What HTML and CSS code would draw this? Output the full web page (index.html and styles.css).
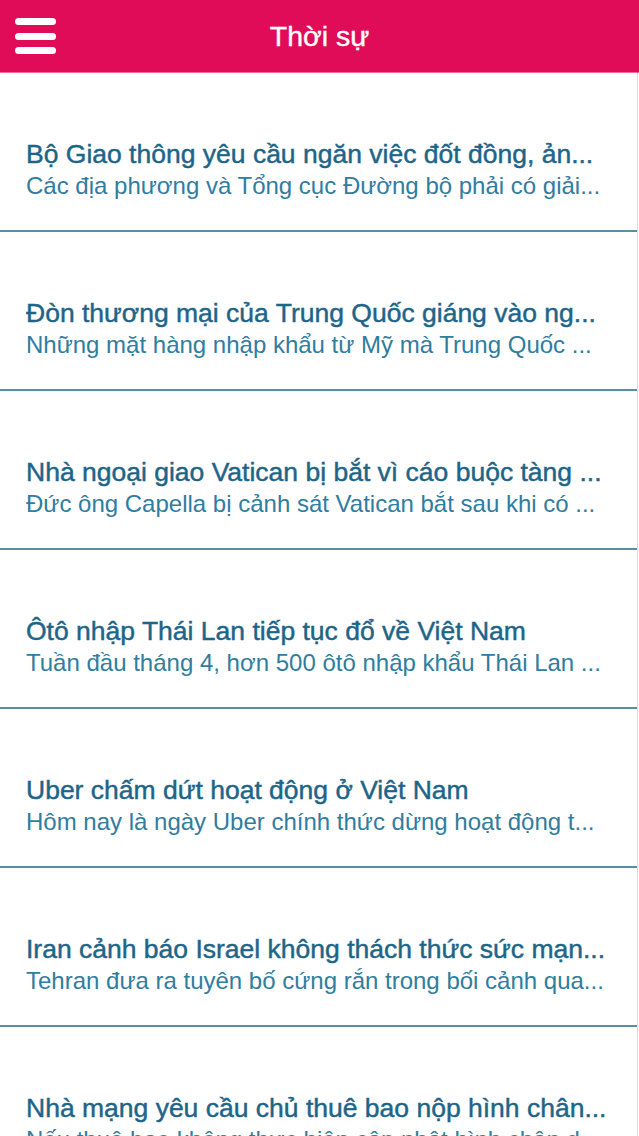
FILE: index.html
```html
<!DOCTYPE html>
<html lang="vi">
<head>
<meta charset="utf-8">
<title>Thời sự</title>
<link rel="stylesheet" href="styles.css">
</head>
<body>
<header class="topbar">
  <button class="menu" aria-label="Menu">
    <span class="bar"></span><span class="bar"></span><span class="bar"></span>
  </button>
  <h1 class="title">Thời sự</h1>
</header>
<ul class="list">
  <li class="item">
    <div class="head">Bộ Giao thông yêu cầu ngăn việc đốt đồng, ản...</div>
    <div class="sub">Các địa phương và Tổng cục Đường bộ phải có giải...</div>
  </li>
  <li class="item">
    <div class="head">Đòn thương mại của Trung Quốc giáng vào ng...</div>
    <div class="sub">Những mặt hàng nhập khẩu từ Mỹ mà Trung Quốc ...</div>
  </li>
  <li class="item">
    <div class="head">Nhà ngoại giao Vatican bị bắt vì cáo buộc tàng ...</div>
    <div class="sub">Đức ông Capella bị cảnh sát Vatican bắt sau khi có ...</div>
  </li>
  <li class="item">
    <div class="head">Ôtô nhập Thái Lan tiếp tục đổ về Việt Nam</div>
    <div class="sub">Tuần đầu tháng 4, hơn 500 ôtô nhập khẩu Thái Lan ...</div>
  </li>
  <li class="item">
    <div class="head">Uber chấm dứt hoạt động ở Việt Nam</div>
    <div class="sub">Hôm nay là ngày Uber chính thức dừng hoạt động t...</div>
  </li>
  <li class="item">
    <div class="head">Iran cảnh báo Israel không thách thức sức mạn...</div>
    <div class="sub">Tehran đưa ra tuyên bố cứng rắn trong bối cảnh qua...</div>
  </li>
  <li class="item">
    <div class="head">Nhà mạng yêu cầu chủ thuê bao nộp hình chân...</div>
    <div class="sub">Nếu thuê bao không thực hiện cập nhật hình chân d</div>
  </li>
</ul>
</body>
</html>
```
FILE: styles.css
```css
* { box-sizing: border-box; }
html, body {
  margin: 0;
  padding: 0;
  background: #ffffff;
  font-family: "Liberation Sans", Arial, sans-serif;
  overflow: hidden;
  height: 1136px;
}
.topbar {
  height: 73px;
  background: #e00c58;
  border-bottom: 1px solid #ef6a95;
  display: flex;
  align-items: center;
  justify-content: center;
  position: relative;
}
.menu {
  position: absolute;
  left: 15px;
  top: 18px;
  width: 41px;
  height: 36px;
  padding: 0;
  border: 0;
  background: transparent;
  display: flex;
  flex-direction: column;
  justify-content: space-between;
}
.bar {
  display: block;
  width: 41px;
  height: 7px;
  border-radius: 4px;
  background: #ffffff;
}
.title {
  margin: 0;
  color: #ffffff;
  font-size: 28.5px;
  font-weight: normal;
  -webkit-text-stroke: 0.4px #ffffff;
}
.list {
  list-style: none;
  margin: 0;
  padding: 0;
  width: 638px;
  border-right: 1px solid #dadada;
}
.item {
  padding: 65px 20px 28px 26px;
  border-bottom: 2px solid #5a8ca4;
}
.head, .sub {
  white-space: nowrap;
  overflow: hidden;
  line-height: 32px;
}
.head {
  color: #1d6588;
  font-size: 26.5px;
  -webkit-text-stroke: 0.45px #1d6588;
}
.sub {
  color: #2f7d9f;
  font-size: 24px;
}
```
